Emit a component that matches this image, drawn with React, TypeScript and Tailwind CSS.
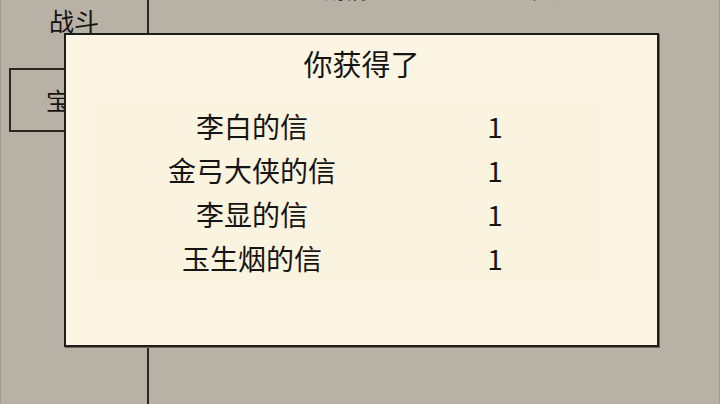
import React from "react"

type Reward = {
  name: string
  count: number
}

const rewards: Reward[] = [
  { name: "李白的信", count: 1 },
  { name: "金弓大侠的信", count: 1 },
  { name: "李显的信", count: 1 },
  { name: "玉生烟的信", count: 1 },
]

const font = { fontFamily: '"Noto Sans CJK SC", "Noto Sans", sans-serif' }

export default function App() {
  return (
    <main className="relative h-[404px] w-[720px] overflow-hidden bg-[#b8b1a5] text-[#161513]" style={font}>
      {/* page behind the popup */}
      <div className="flex h-full border-x border-[#a29b90]">
        <aside className="flex w-[148px] shrink-0 flex-col border-r-2 border-[#2a2825]">
          <div className="flex h-[33px] items-end justify-center text-[25px] leading-none">战斗</div>
          <div className="ml-[8px] mt-[35px] flex h-[64px] w-[120px] items-center border-2 border-[#2a2825] pl-[35px] text-[24px]">
            宝箱
          </div>
        </aside>
        <section className="relative flex-1">
          <div className="-mt-[24px] flex text-[24px] leading-none">
            <span className="ml-[172px]">剧情</span>
            <span className="ml-[160px]">任务</span>
          </div>
        </section>
      </div>

      {/* reward popup */}
      <div className="absolute left-[64px] top-[33px] h-[314px] w-[595px] border-2 border-[#1e1d1b] bg-[#fcf5e3] shadow-[1px_1px_0_#6a665e]">
        <h2 className="pt-[8px] text-center text-[29px] leading-[40px] font-normal">你获得了</h2>
        <div className="mx-[28px] mt-[21px] w-[506px] bg-[#faf3df]">
          {rewards.map((reward) => (
            <div key={reward.name} className="flex h-[44px] items-center text-[28px] leading-none">
              <span className="w-[316px] text-center">{reward.name}</span>
              <span className="w-[170px] text-center">{reward.count}</span>
            </div>
          ))}
        </div>
      </div>
    </main>
  )
}
